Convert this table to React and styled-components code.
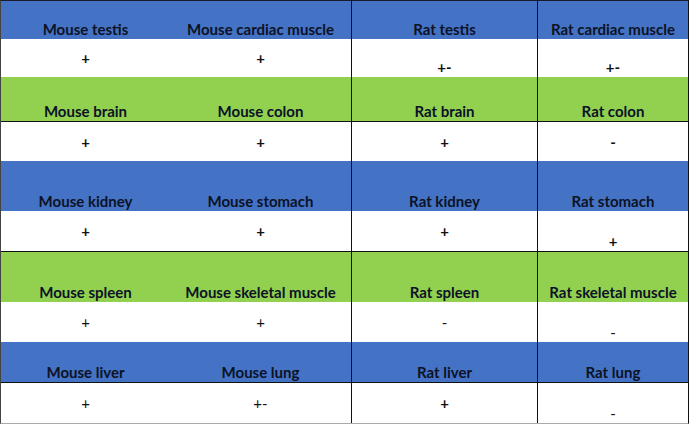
import React from 'react'
import styled, { createGlobalStyle } from 'styled-components'

const blue = "#4472C4"
const green = "#92D050"

// each row: kind, bg, height, line under it
const rows = [
  { kind: 'head', bg: blue, h: 38, cells: ['Mouse testis', 'Mouse cardiac muscle', 'Rat testis', 'Rat cardiac muscle'] },
  { kind: 'val', h: 38, cells: [['+', 'mid', 1], ['+', 'mid', 1], ['+-', 'end', 1], ['+-', 'end', 1]] },
  { kind: 'head', bg: green, h: 45, line: true, cells: ['Mouse brain', 'Mouse colon', 'Rat brain', 'Rat colon'] },
  { kind: 'val', h: 39, cells: [['+', 'mid', 1], ['+', 'mid', 1], ['+', 'mid', 1], ['-', 'mid', 1]] },
  { kind: 'head', bg: blue, h: 50, cells: ['Mouse kidney', 'Mouse stomach', 'Rat kidney', 'Rat stomach'] },
  { kind: 'val', h: 41, line: true, cells: [['+', 'mid', 1], ['+', 'mid', 1], ['+', 'mid', 1], ['+', 'end', 1]] },
  { kind: 'head', bg: green, h: 50, cells: ['Mouse spleen', 'Mouse skeletal muscle', 'Rat spleen', 'Rat skeletal muscle'] },
  { kind: 'val', h: 40, cells: [['+', 'mid', 0], ['+', 'mid', 0], ['-', 'mid', 0], ['-', 'end', 0]] },
  { kind: 'head', bg: blue, h: 41, line: true, cells: ['Mouse liver', 'Mouse lung', 'Rat liver', 'Rat lung'] },
  { kind: 'val', h: 40, cells: [['+', 'mid', 0], ['+-', 'mid', 0], ['+', 'mid', 1], ['-', 'end', 0]] },
]

function App() {
  return (
    <>
      <Global />
      <Table>
        {rows.map((r, i) => (
          <Row key={i} $bg={r.bg} $h={r.h} $line={r.line}>
            {r.cells.map((c, j) =>
              r.kind === 'head' ? (
                <HeadCell key={j}>{c}</HeadCell>
              ) : (
                <ValCell key={j} $align={c[1]} $bold={c[2]}>{c[0]}</ValCell>
              )
            )}
          </Row>
        ))}
      </Table>
    </>
  )
}

export default App

const Global = createGlobalStyle`
  body {
    margin: 0;
    background: #fff;
    font-family: Lato, "Open Sans", sans-serif;
  }
`

const Table = styled.div`
  width: 689px;
  box-sizing: border-box;
  border-top: 1px solid #1a1a2a;
  border-left: 1px solid #444;
  border-right: 1px solid #111;
  border-bottom: 1px solid #aaa;
  display: flex;
  flex-direction: column;
`

const Row = styled.div`
  display: grid;
  grid-template-columns: 169px 182px 186px 150px;
  height: ${p => p.$h}px;
  box-sizing: border-box;
  background: ${p => p.$bg || '#fff'};
  border-bottom: ${p => (p.$line ? '1px solid #111' : 'none')};

  & > div:nth-child(2),
  & > div:nth-child(3) {
    border-right: 1px solid #111;
  }
`

const HeadCell = styled.div`
  display: flex;
  align-items: flex-end;
  justify-content: center;
  padding-bottom: 1px;
  font-size: 15px;
  font-weight: 700;
  line-height: 18px;
  color: #0c1226;
  white-space: nowrap;
`

const ValCell = styled.div`
  display: flex;
  align-items: ${p => (p.$align === 'end' ? 'flex-end' : 'center')};
  justify-content: center;
  padding-bottom: ${p => (p.$align === 'end' ? '1px' : '0')};
  font-size: 15px;
  font-weight: ${p => (p.$bold ? 700 : 400)};
  line-height: 18px;
  color: #111;
`
